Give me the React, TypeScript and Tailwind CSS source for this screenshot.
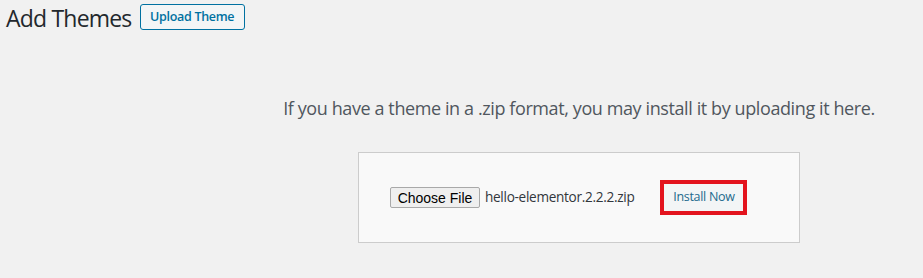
export default function App() {
  return (
    <div
      className="w-[923px] h-[278px] bg-[#f1f1f1] overflow-hidden"
      style={{ fontFamily: '"Open Sans", "Noto Sans", sans-serif' }}
    >
      <div className="flex items-center pl-[6px] pt-[4px] h-[30px]">
        <h1 className="text-[23px] leading-none font-normal text-[#23282d] tracking-[-0.8px] pt-[3px]">Add Themes</h1>
        <button className="ml-[8px] h-[26px] px-[9.5px] border border-[#0071a1] rounded-[3px] bg-[#f3f5f6] text-[#0071a1] text-[12.5px] font-semibold tracking-[-0.3px]">
          Upload Theme
        </button>
      </div>

      <div className="pl-[235px] flex flex-col items-center">
        <p className="mt-[66px] text-[18px] leading-[24px] text-[#50575e] tracking-[-0.4px]">
          If you have a theme in a .zip format, you may install it by uploading it here.
        </p>
        <form className="mt-[32px] w-[442px] h-[91px] border border-[#cccccc] bg-[#f9f9f9] flex items-center pl-[31px]">
          <button
            type="button"
            className="h-[21px] w-[90px] border border-[#a9a9a9] rounded-[2px] bg-[#efefef] text-[14px] leading-none text-black"
            style={{ fontFamily: '"Liberation Sans", Arial, sans-serif' }}
          >
            Choose File
          </button>
          <span className="ml-[5px] text-[13.6px] text-[#32373c] tracking-[-0.3px]">hello-elementor.2.2.2.zip</span>
          <button
            type="button"
            className="ml-[26px] h-[35px] w-[87px] border-[4.5px] border-[#e3141e] bg-[#f3f5f6] text-[#1e6a8d] text-[12.5px] tracking-[-0.3px]"
          >
            Install Now
          </button>
        </form>
      </div>
    </div>
  );
}
